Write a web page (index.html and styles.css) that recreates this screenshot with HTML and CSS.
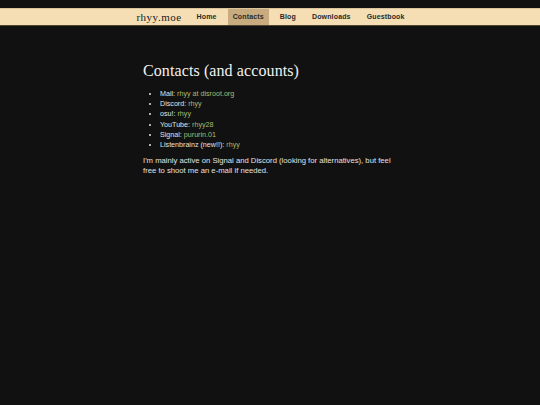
FILE: index.html
```html
<!DOCTYPE html>
<html>
<head>
<meta charset="utf-8">
<title>Contacts - rhyy.moe</title>
<link rel="stylesheet" href="styles.css">
</head>
<body>
<nav class="topbar">
  <div class="topbar-inner">
    <a class="logo" href="#">rhyy.moe</a>
    <a class="nav-link" href="#">Home</a>
    <a class="nav-link active" href="#">Contacts</a>
    <a class="nav-link" href="#">Blog</a>
    <a class="nav-link" href="#">Downloads</a>
    <a class="nav-link" href="#">Guestbook</a>
  </div>
</nav>
<main class="content">
  <h1 class="title">Contacts (and accounts)</h1>
  <ul class="contacts">
    <li>Mail: <a href="#">rhyy at disroot.org</a></li>
    <li>Discord: <a href="#">rhyy</a></li>
    <li>osu!: <a href="#">rhyy</a></li>
    <li>YouTube: <a href="#">rhyy28</a></li>
    <li>Signal: <a href="#">pururin.01</a></li>
    <li>Listenbrainz (new!!): <a href="#">rhyy</a></li>
  </ul>
  <p class="note">I'm mainly active on Signal and Discord (looking for alternatives), but feel free to shoot me an e-mail if needed.</p>
</main>
</body>
</html>
```
FILE: styles.css
```css
html, body {
  margin: 0;
  padding: 0;
  background: #111111;
}
body {
  font-family: "Liberation Sans", Arial, sans-serif;
  font-size: 7.3px;
  line-height: 10.2px;
  color: #e2e2e2;
}
.topbar {
  margin-top: 8px;
  background: #f5deb3;
  border-top: 1px solid #d9c49c;
  border-bottom: 1px solid #4e4432;
}
.topbar-inner {
  display: flex;
  justify-content: center;
  align-items: stretch;
  height: 16px;
  gap: 6px;
  padding-left: 6px;
}
.logo {
  font-family: "Liberation Serif", "Times New Roman", serif;
  font-size: 11px;
  letter-spacing: 0.5px;
  color: #222222;
  text-decoration: none;
  line-height: 16px;
  margin-right: 4px;
}
.nav-link {
  font-weight: bold;
  font-size: 7px;
  color: #2a2a2a;
  text-decoration: none;
  padding: 0 5px;
  line-height: 16px;
  letter-spacing: 0.15px;
}
.nav-link.active {
  background: #c9ab80;
}
.content {
  width: 254px;
  margin: 0 auto;
  padding-top: 35px;
}
.title {
  margin: 0;
  font-family: "Liberation Serif", "Times New Roman", serif;
  font-weight: normal;
  font-size: 16px;
  line-height: 20px;
  letter-spacing: 0.1px;
  color: #f2f2f2;
  white-space: nowrap;
}
.contacts {
  margin: 8px 0 0 0;
  padding-left: 17px;
  font-size: 7.15px;
}
.contacts a {
  color: #acbb6c;
  text-decoration: none;
}
.note {
  margin: 6px 0 0 0;
  font-size: 7.7px;
}
```
